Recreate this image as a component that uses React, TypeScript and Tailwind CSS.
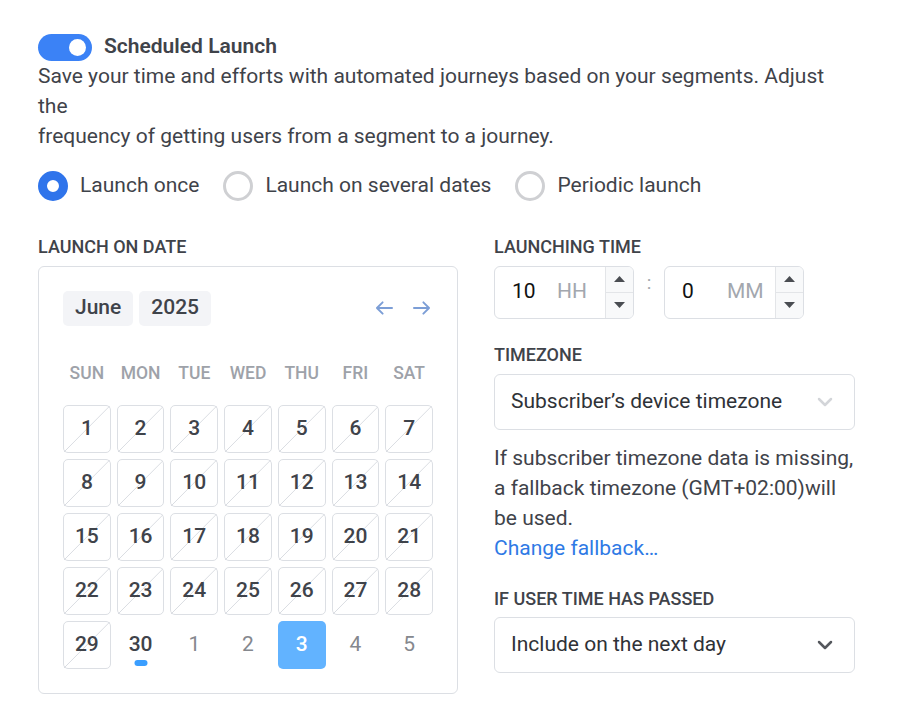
import React from 'react';
import { ChevronDown } from 'lucide-react';

const WEEKDAYS = ['SUN', 'MON', 'TUE', 'WED', 'THU', 'FRI', 'SAT'];

type Day = { n: number; kind: 'past' | 'today' | 'next' | 'selected' };

const days: Day[] = [
  ...Array.from({ length: 29 }, (_, i) => ({ n: i + 1, kind: 'past' as const })),
  { n: 30, kind: 'today' },
  { n: 1, kind: 'next' },
  { n: 2, kind: 'next' },
  { n: 3, kind: 'selected' },
  { n: 4, kind: 'next' },
  { n: 5, kind: 'next' },
];

const Label: React.FC<{ children: React.ReactNode; className?: string }> = ({ children, className = '' }) => (
  <div className={`text-[18px] leading-[20px] font-medium text-[#3f434a] ${className}`}>{children}</div>
);

const Radio: React.FC<{ checked?: boolean; label: string }> = ({ checked, label }) => (
  <label className="flex items-center gap-3">
    {checked ? (
      <span className="w-[30px] h-[30px] rounded-full border-[9px] border-[#2f74eb] bg-white" />
    ) : (
      <span className="w-[30px] h-[30px] rounded-full border-[3px] border-[#cfd0d3] bg-white" />
    )}
    <span className="text-[21px] text-[#3f434a]">{label}</span>
  </label>
);

const DayCell: React.FC<{ day: Day }> = ({ day }) => {
  if (day.kind === 'past') {
    return (
      <div className="relative h-[48px] rounded-[5px] border border-[#dcdfe4] flex items-center justify-center text-[21px] font-medium text-[#3f434a]">
        <svg className="absolute inset-0 w-full h-full" preserveAspectRatio="none" viewBox="0 0 100 100">
          <line x1="0" y1="100" x2="100" y2="0" stroke="#dadde2" strokeWidth="1" vectorEffect="non-scaling-stroke" />
        </svg>
        <span className="relative">{day.n}</span>
      </div>
    );
  }
  if (day.kind === 'today') {
    return (
      <div className="relative h-[48px] flex items-center justify-center text-[21px] font-medium text-[#3f434a]">
        <span>{day.n}</span>
        <span className="absolute left-1/2 -translate-x-1/2 bottom-[3px] w-[13px] h-[6px] rounded-full bg-[#3a9eff]" />
      </div>
    );
  }
  if (day.kind === 'selected') {
    return (
      <div className="h-[48px] rounded-[5px] bg-[#62b3ff] flex items-center justify-center text-[21px] font-medium text-white">
        {day.n}
      </div>
    );
  }
  return <div className="h-[48px] flex items-center justify-center text-[21px] text-[#85888e]">{day.n}</div>;
};

const TimeInput: React.FC<{ value: string; placeholder: string }> = ({ value, placeholder }) => (
  <div className="flex w-[140px] h-[53px] rounded-[6px] border border-[#dcdfe4] overflow-hidden">
    <div className="flex-1 flex items-center pl-[17px] text-[21px]">
      <span className="text-[#111] w-[45px]">{value}</span>
      <span className="text-[#a3a7ae]">{placeholder}</span>
    </div>
    <div className="w-[28px] flex flex-col border-l border-[#e3e5e8] bg-[#f8f9fa]">
      <div className="flex-1 flex items-center justify-center border-b border-[#e3e5e8]">
        <svg width="11" height="6" viewBox="0 0 11 6"><polygon points="0,6 5.5,0 11,6" fill="#4a4d52" /></svg>
      </div>
      <div className="flex-1 flex items-center justify-center">
        <svg width="11" height="6" viewBox="0 0 11 6"><polygon points="0,0 5.5,6 11,0" fill="#4a4d52" /></svg>
      </div>
    </div>
  </div>
);

const Select: React.FC<{ value: string; muted?: boolean }> = ({ value, muted }) => (
  <div className="flex items-center justify-between h-[56px] rounded-[6px] border border-[#dcdfe4] pl-[16px] pr-[17px]">
    <span className="text-[21px] text-[#2f3237]">{value}</span>
    <ChevronDown size={24} strokeWidth={2.5} className={muted ? 'text-[#d3d5d9]' : 'text-[#55585d]'} />
  </div>
);

export default function App() {
  return (
    <div className="min-h-screen bg-white font-['Roboto',sans-serif] text-[#3f434a]">
      <div className="w-[817px] ml-[38px] pt-[33px]">
        <div className="flex items-center gap-3 h-[28px]">
          <div className="w-[54px] h-[27px] rounded-full bg-[#3b82f6] flex items-center justify-end pr-[6px]">
            <span className="w-[17px] h-[17px] rounded-full bg-white" />
          </div>
          <span className="text-[21px] font-semibold text-[#3f434a]">Scheduled Launch</span>
        </div>
        <p className="text-[21px] leading-[30px] text-[#3f434a]">
          Save your time and efforts with automated journeys based on your segments. Adjust the
          <br />
          frequency of getting users from a segment to a journey.
        </p>

        <div className="flex items-center gap-[24px] mt-[19px]">
          <Radio checked label="Launch once" />
          <Radio label="Launch on several dates" />
          <Radio label="Periodic launch" />
        </div>

        <div className="flex gap-[36px] mt-[35px]">
          {/* date */}
          <div className="w-[420px]">
            <Label className="mb-[9px]">LAUNCH ON DATE</Label>
            <div className="rounded-[6px] border border-[#dcdfe4] px-[24px] pt-[24px] pb-[24px]">
              <div className="flex items-center justify-between h-[35px]">
                <div className="flex gap-[6px]">
                  <span className="h-[35px] px-[12px] flex items-center rounded-[5px] bg-[#f3f4f7] text-[21px] font-medium">June</span>
                  <span className="h-[35px] px-[12px] flex items-center rounded-[5px] bg-[#f3f4f7] text-[21px] font-medium">2025</span>
                </div>
                <div className="flex items-center gap-[20px] pr-[3px]">
                  <svg width="17" height="14" viewBox="0 0 18 14" fill="none" stroke="#7c9ed6" strokeWidth="2" strokeLinecap="round" strokeLinejoin="round">
                    <path d="M17 7H1M7 1L1 7l6 6" />
                  </svg>
                  <svg width="17" height="14" viewBox="0 0 18 14" fill="none" stroke="#7c9ed6" strokeWidth="2" strokeLinecap="round" strokeLinejoin="round">
                    <path d="M1 7h16M11 1l6 6-6 6" />
                  </svg>
                </div>
              </div>
              <div className="grid grid-cols-7 gap-x-[6px] mt-[34px] h-[28px] items-center">
                {WEEKDAYS.map((d) => (
                  <div key={d} className="text-center text-[17.5px] font-medium text-[#9ea2a9]">{d}</div>
                ))}
              </div>
              <div className="grid grid-cols-7 gap-[6px] mt-[17px]">
                {days.map((d, i) => (
                  <DayCell key={i} day={d} />
                ))}
              </div>
            </div>
          </div>

          {/* time */}
          <div className="w-[361px]">
            <Label className="mb-[9px]">LAUNCHING TIME</Label>
            <div className="flex items-center">
              <TimeInput value="10" placeholder="HH" />
              <span className="w-[30px] text-center text-[19px] text-[#a3a7ae] -mt-[18px]">:</span>
              <TimeInput value="0" placeholder="MM" />
            </div>

            <Label className="mt-[26px] mb-[9px]">TIMEZONE</Label>
            <Select value="Subscriber’s device timezone" muted />
            <p className="mt-[13px] text-[21px] leading-[30px] text-[#3f434a]">
              If subscriber timezone data is missing, a fallback timezone (GMT+02:00)will be used.
              <br />
              <a className="text-[#2f7ae5]">Change fallback…</a>
            </p>

            <Label className="mt-[26px] mb-[8px]">IF USER TIME HAS PASSED</Label>
            <Select value="Include on the next day" />
          </div>
        </div>
      </div>
    </div>
  );
}
